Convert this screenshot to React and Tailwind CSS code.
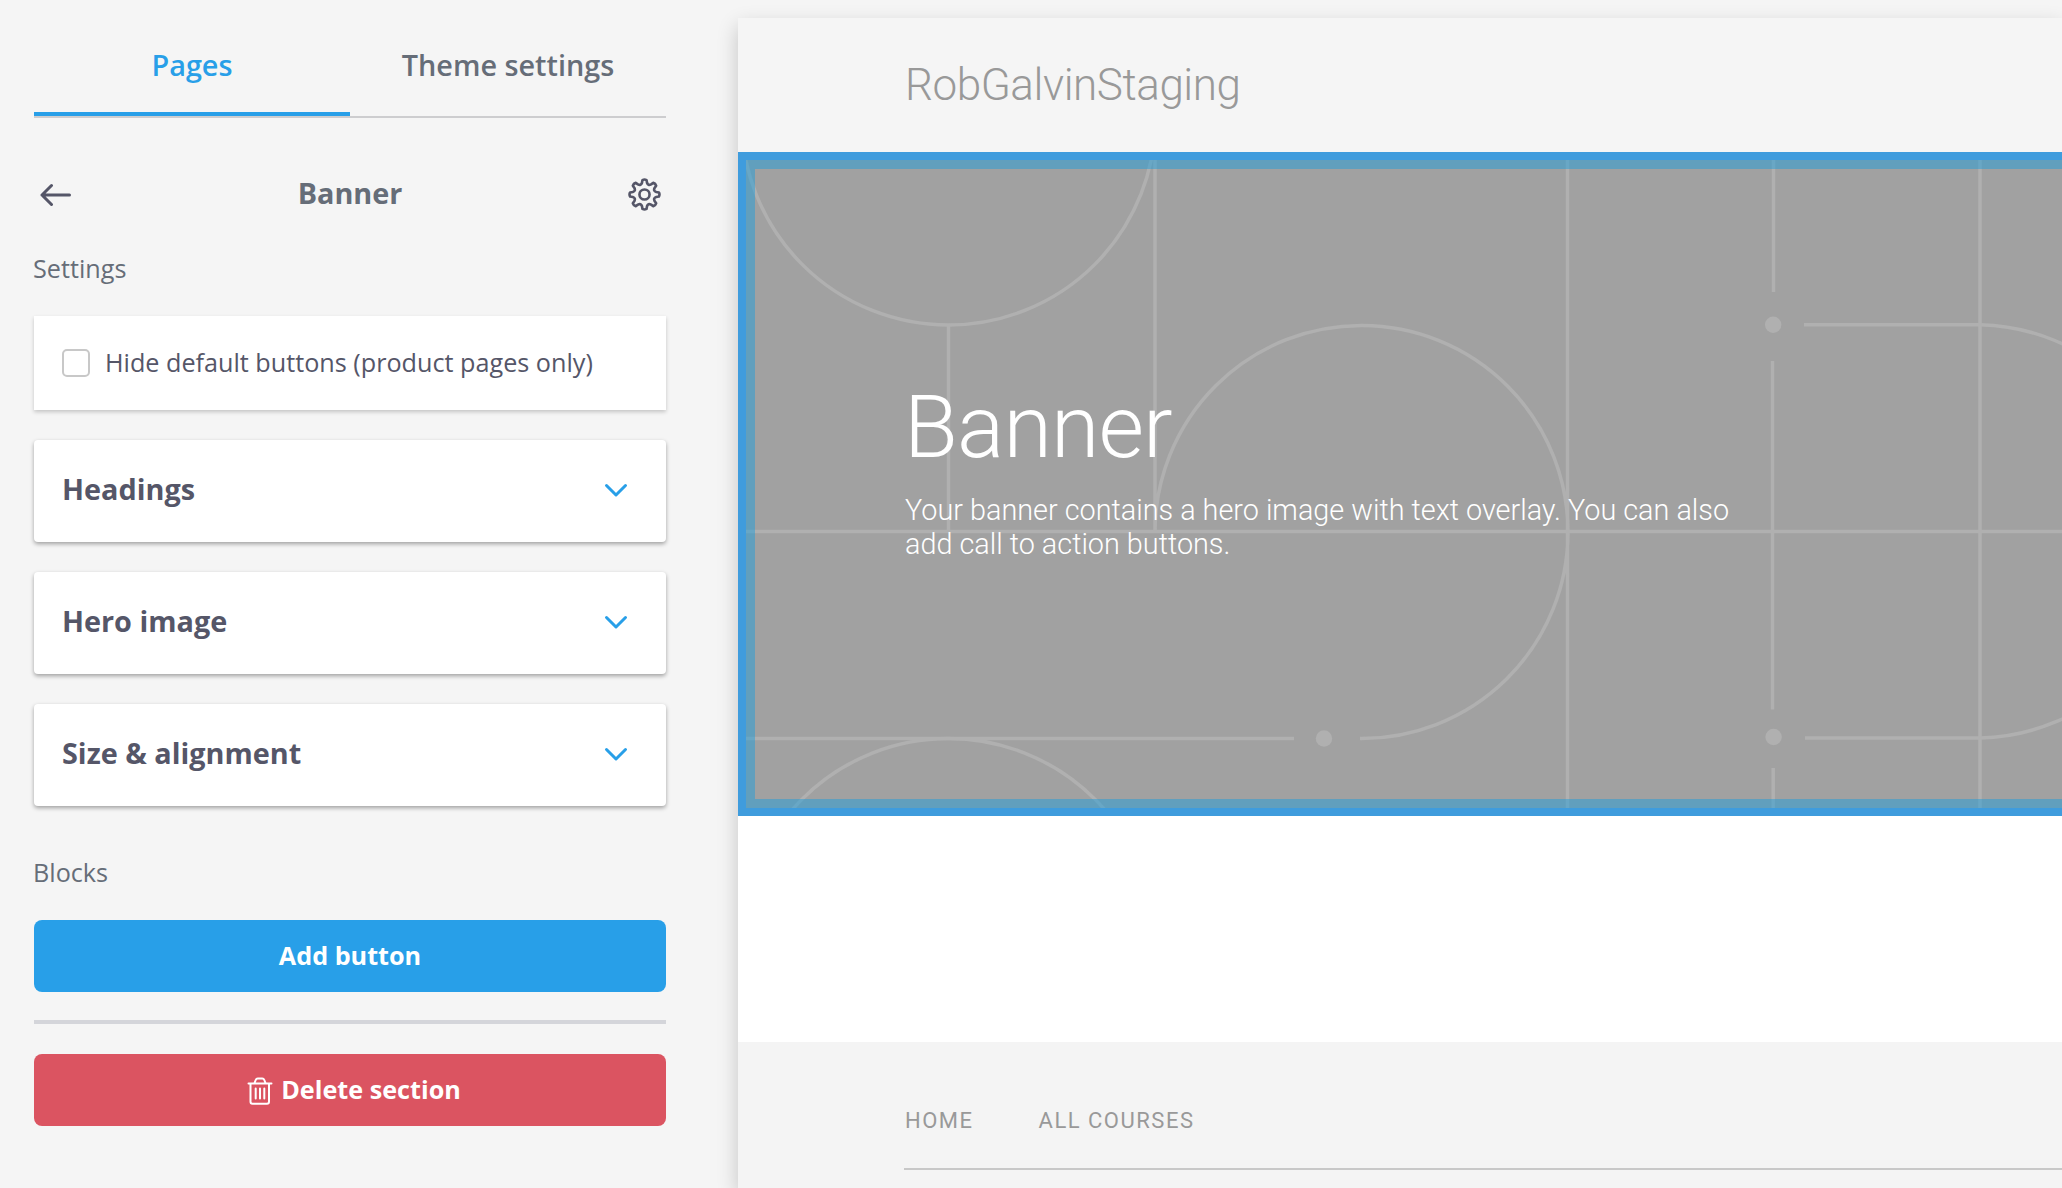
const PANELS = ['Headings', 'Hero image', 'Size & alignment'];

function Chevron() {
  return (
    <svg className="h-6 w-6" viewBox="0 0 24 24" fill="none" stroke="#289fe8" strokeWidth="3" strokeLinecap="round" strokeLinejoin="round">
      <path d="M2.5 6.5 12 16l9.5-9.5" />
    </svg>
  );
}

function ArrowLeft() {
  return (
    <svg className="h-8 w-8" viewBox="0 0 32 32" fill="none" stroke="#555668" strokeWidth="3" strokeLinecap="round" strokeLinejoin="round">
      <path d="M29.500 17H2M11.5 7.5 2 17l9.5 9.5" />
    </svg>
  );
}

function Gear() {
  const teeth = [];
  for (let i = 0; i < 8; i += 1) teeth.push(i * 45);
  const point = (deg, r) => {
    const a = ((deg - 90) * Math.PI) / 180;
    return `${(17 + r * Math.cos(a)).toFixed(2)} ${(17 + r * Math.sin(a)).toFixed(2)}`;
  };
  let d = `M${point(-8, 15)}`;
  teeth.forEach((t) => {
    d += `Q${point(t, 16)} ${point(t + 8, 15)}`;
    d += `L${point(t + 12, 12.4)}Q${point(t + 22.5, 9.6)} ${point(t + 33, 12.4)}L${point(t + 37, 15)}`;
  });
  return (
    <svg className="mt-px h-[33px] w-[33px]" viewBox="0 0 34 34" fill="none" stroke="#555668" strokeWidth="2.7" strokeLinejoin="round">
      <path d={`${d}Z`} />
      <circle cx="17" cy="17" r="5.2" />
    </svg>
  );
}

function Trash() {
  return (
    <svg className="mt-[3px] h-7 w-[26px]" viewBox="0 0 26 28" fill="none" stroke="#fff" strokeWidth="2" strokeLinecap="round" strokeLinejoin="round">
      <path d="M1.5 6.5h23M3.5 6.5v18.200q0 2 2 2h14.500q2 0 2-2V6.500M7.500 6l1.200-3q.6-1.500 2-1.500h4.600q1.400 0 2 1.500l1.200 3M8.700 11.500v10M13 11.500v10M17.300 11.500v10" />
    </svg>
  );
}

function Pattern() {
  return (
    <svg className="absolute inset-0 h-full w-full" viewBox="746 160 1316 648" preserveAspectRatio="xMinYMin slice" fill="none" stroke="#b0b0b0" strokeWidth="3.5">
      <circle cx="948.5" cy="118" r="207" />
      <circle cx="948.5" cy="945.5" r="207" />
      <path d="M746 531.5H2062M746 738.500H1294M948.500 325V531.500M1155 160V531.500M1155 531.500A206.500 206.500 0 1 1 1360 738.500M1567.500 160V808M1980 160V808M1773.500 160V292M1772.500 361V709.500M1773.200 768V808" />
      <path d="M1804 324.700H1980A206.700 206.700 0 0 1 1980 738H1805" />
      <g fill="#b0b0b0" stroke="none">
        <circle cx="1324" cy="738.500" r="8.200" />
        <circle cx="1773.200" cy="324.700" r="8.200" />
        <circle cx="1773.600" cy="737" r="8.200" />
      </g>
    </svg>
  );
}

function Sidebar() {
  return (
    <aside className="flex w-[738px] shrink-0 flex-col pr-[72px] pl-[34px] font-['Open_Sans',sans-serif]">
      <nav className="flex h-[118px] border-b-2 border-[#cdcdcf] text-[28.800px] leading-10 font-semibold">
        <a className="flex-1 border-b-4 border-[#289fe8] pt-[45px] text-center text-[#289fe8]">Pages</a>
        <a className="flex-1 pt-[45px] text-center text-[#666d78]">Theme settings</a>
      </nav>
      <header className="mt-[56px] flex h-10 items-center justify-between pr-[5px] pl-[6px]">
        <ArrowLeft />
        <h1 className="-mt-0.5 text-[28.800px] leading-10 font-bold text-[#666d78]">Banner</h1>
        <Gear />
      </header>
      <h2 className="mt-9 -ml-px h-9 text-[25.200px] leading-9 text-[#666d78]">Settings</h2>
      <label className="mt-[30px] flex h-[94px] items-center bg-white pl-7 shadow-[0_2px_4px_rgba(0,0,0,0.2)]">
        <span className="h-7 w-7 rounded-[5px] border-2 border-[#c8c8c8] bg-white" />
        <span className="-mt-0.5 ml-[15px] text-[25.200px] leading-9 text-[#555668]">Hide default buttons (product pages only)</span>
      </label>
      <div className="mt-[30px] flex flex-col gap-[30px]">
        {PANELS.map((title) => (
          <section key={title} className="flex h-[102px] items-center justify-between rounded bg-white pr-[38px] pl-7 shadow-[0_2px_4px_rgba(0,0,0,0.35)]">
            <h3 className="-mt-1 text-[28.800px] leading-10 font-bold text-[#555668]">{title}</h3>
            <Chevron />
          </section>
        ))}
      </div>
      <h2 className="mt-12 -ml-px h-9 text-[25.200px] leading-9 text-[#666d78]">Blocks</h2>
      <button className="mt-[30px] h-[72px] rounded-lg bg-[#289fe8] pb-0.5 text-[25.200px] leading-9 font-bold text-white">Add button</button>
      <hr className="mt-7 border-t-4 border-[#d4d5da]" />
      <button className="mt-[30px] flex h-[72px] items-center justify-center gap-2 rounded-lg bg-[#db5461] pb-0.5 pl-2 text-[25.200px] leading-9 font-bold text-white">
        <Trash />
        Delete section
      </button>
    </aside>
  );
}

function Preview() {
  return (
    <main className="mt-[18px] flex min-w-0 flex-1 flex-col bg-white font-[Roboto,sans-serif] shadow-[0_8px_20px_rgba(0,0,0,0.2)]">
      <header className="flex h-[134px] items-center bg-[#f5f5f5] pl-[167px] text-[44px] font-light tracking-[-0.01em] text-[#999]">RobGalvinStaging</header>
      <section className="h-[664px] border-y-8 border-l-8 border-[#3f9cdd]">
        <div className="relative flex h-full flex-col overflow-hidden bg-[#a1a1a1] pl-[159px] text-white">
          <Pattern />
          <div className="absolute inset-0 border-y-9 border-l-9 border-[#219dd9]/50" />
          <h2 className="relative mt-[215px] -ml-px text-[88px] leading-[104px] font-light tracking-[-0.01em]">Banner</h2>
          <p className="relative mt-[14px] w-[850px] text-[28.800px] leading-[34px] font-light">
            Your banner contains a hero image with text overlay. You can also add call to action buttons.
          </p>
        </div>
      </section>
      <footer className="mt-[226px] flex-1 bg-[#f4f4f4] pl-[166px]">
        <nav className="flex h-[128px] gap-[65px] border-b-2 border-[#c8c8c8] pt-[63px] pl-px text-[22px] leading-8 tracking-[1.500px] text-[#999]">
          <a>HOME</a>
          <a>ALL COURSES</a>
        </nav>
      </footer>
    </main>
  );
}

export default function App() {
  return (
    <div className="flex h-screen w-screen overflow-hidden bg-[#f5f5f5]">
      <Sidebar />
      <Preview />
    </div>
  );
}
